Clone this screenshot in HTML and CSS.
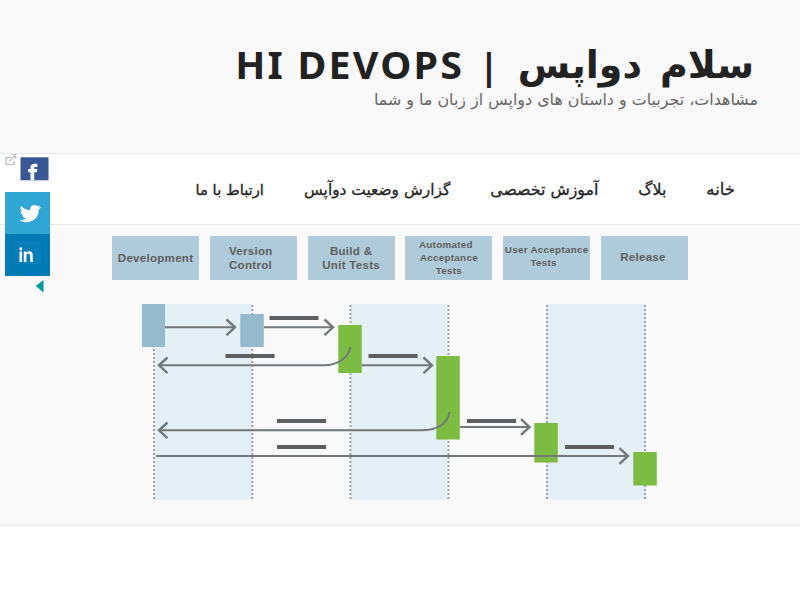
FILE: index.html
```html
<!DOCTYPE html>
<html lang="fa" dir="rtl">
<head>
<meta charset="utf-8">
<title>سلام دواپس | HI DEVOPS</title>
<link rel="stylesheet" href="styles.css">
</head>
<body>
<header class="masthead">
  <h1 class="title"><span class="title-fa">سلام</span> <span class="title-fa title-name">دواپس</span> <span class="title-bar">|</span> <span class="title-en" dir="ltr">HI DEVOPS</span></h1>
  <p class="tagline"><span>مشاهدات، تجربیات و داستان های دواپس از زبان ما و شما</span></p>
</header>
<nav class="nav">
  <a class="n1">خانه</a><a class="n2">بلاگ</a><a class="n3">آموزش تخصصی</a><a class="n4">گزارش وضعیت دوآپس</a><a class="n5">ارتباط با ما</a>
</nav>
<main class="hero" dir="ltr">
  <div class="stages">
    <div class="stage">Development</div>
    <div class="stage"><span class="left">Version<br>Control</span></div>
    <div class="stage build">Build &amp;<br>Unit Tests</div>
    <div class="stage small auto"><span>Automated &nbsp;<br>Acceptance<br>Tests</span></div>
    <div class="stage small upper">User Acceptance<br>Tests &nbsp;</div>
    <div class="stage release">Release</div>
  </div>
  <svg class="flow" width="576" height="200" viewBox="112 302 576 200">
    <g fill="#e4eff6"><path d="M154 304h98.500v196H154zM350.500 304h98v196h-98zM547 304h98v196h-98z"/></g>
    <path d="M154 305v194M252.300 305v194M350.500 305v194M448.500 305v194M547 305v194M645 305v194" stroke="#9da1a3" stroke-width="2" stroke-dasharray="2 2"/>
    <path fill="#96bacd" d="M142 304h23v43h-23zM240.300 314h23.500v33h-23.500z"/>
    <path fill="#7dbc43" d="M338.300 325h23.500v48h-23.500zM436.300 356h23.500v83.500h-23.500zM534.300 423h23.500v39.500h-23.500zM633.300 452h23.500v33.500h-23.500z"/>
    <path fill="#5d5e60" d="M269.500 316h49v4h-49zM225.500 354h49v4h-49zM368.500 354h49v4h-49zM277 419h49v4h-49zM277 445h49v4h-49zM467 419h49v4h-49zM565 445h49v4h-49z"/>
    <g fill="none" stroke="#727779" stroke-width="2">
      <path d="M165 327.300h70M264 327.300h69M159 365.300h165c14 0 25-8 26.500-18.500M362 365.300h70M159 430.300h263c15 0 26-7 27.500-18.500M460 427h70M156 456h472"/>
      <path stroke-width="2.400" d="M226.500 319.500l8.500 7.800-8.500 7.800M324.500 319.500l8.500 7.800-8.500 7.800M167.500 357.500l-8.500 7.800 8.500 7.800M423.500 357.500l8.500 7.800-8.500 7.800M167.500 422.500l-8.500 7.800 8.500 7.800M521 419.200l8.500 7.800-8.500 7.800M619.500 448.200l8.500 7.800-8.500 7.800"/>
    </g>
  </svg>
</main>
<aside class="share" dir="ltr">
  <div class="share-top">
    <svg width="15" height="24" viewBox="0 0 15 24" fill="none" stroke="#c3c6c9" stroke-width="1.600"><path d="M6 4.500H1v7h8V8M4.500 8.500L10 2.500M6.500 1.500h4v4.500"/></svg>
    <svg width="29" height="24" viewBox="0 0 29 24"><path fill="#3a5795" d="M.5.300h28v23H.500z"/><path fill="#fff" d="M10.500 23.300v-8H8.200v-3.200h2.300v-1.300c0-2.800 1.400-4 3.900-4h3v3.200h-2c-1 0-1.200.4-1.200 1.300v.8h3.100l-.4 3.200h-2.700v8z"/></svg>
  </div>
  <svg class="tw" width="45" height="42" viewBox="0 0 45 42"><path fill="#2fa6d3" d="M0 0h45v42H0z"/><path fill="#fff" transform="translate(14.500 11) scale(.88)" d="M24.500 4.500c-.9.400-1.800.6-2.800.8 1-.7 1.800-1.600 2.100-2.700-.9.600-2 1-3.100 1.200C17.600.6 12 2.200 12 7v1.100C8 8 4.200 6 1.900 3 .6 5.300 1.200 8.100 3.400 9.600c-.8 0-1.500-.2-2.200-.6 0 2.400 1.600 4.400 3.900 4.900-.7.200-1.500.2-2.200.1.600 2 2.400 3.300 4.600 3.400-2 1.700-4.700 2.400-7.300 2.100 9.900 6.300 21.800-.1 21.800-12 1-.8 1.900-1.800 2.500-3z"/></svg>
  <svg class="li" width="45" height="42" viewBox="0 0 45 42"><path fill="#007bb6" d="M0 0h45v42H0z"/><path fill="#087db7" d="M8 7h28v23H8z"/><path fill="#fff" d="M14.500 17.500h2.600V28h-2.600zM14.500 13.600h2.600v2.600h-2.600zM18.800 17.500h2.500v1.300c1.800-2.500 6.500-2 6.500 2V28h-2.600v-6.300c0-3-3.800-2.800-3.800 0V28h-2.600z"/></svg>
  <svg class="tri" width="45" height="20" viewBox="0 0 45 20"><path fill="#009a9a" d="M38.500 4v12.500L30.700 10z"/></svg>
</aside>
</body>
</html>
```
FILE: styles.css
```css
* { box-sizing: border-box; }
body { margin: 0; height: 600px; background: #fff; overflow: hidden; font-family: "DejaVu Sans", sans-serif; }
.masthead { height: 153px; background: #f9f9f9; padding: 43px 42px 0; }
.title { display: flex; align-items: center; height: 46px; margin: 0; padding-right: 4px; font-size: 36px; line-height: 46px; color: #222; white-space: nowrap; }
.title-fa { font-size: 38px; transform: translateY(-1px); }
.title-name { margin-right: 18px; }
.title-bar { margin-right: 19px; font-family: "Noto Sans", sans-serif; }
.title-en { margin-right: 15px; font-family: "Noto Sans", sans-serif; letter-spacing: 2px; transform: scale(1.095, 1.03); transform-origin: right; }
.tagline { margin: 0; height: 24px; line-height: 22px; font-size: 15.900px; color: #666; white-space: nowrap; }
.nav { display: flex; gap: 40px; height: 72px; padding: 1px 65px 0; background: #fff; border-top: 1px solid #e9e9e9; border-bottom: 1px solid #e9e9e9; line-height: 70px; font-size: 15.800px; color: #222; -webkit-text-stroke: .3px #222; white-space: nowrap; }
.n1 { font-size: 16.500px; }
.n4 { font-size: 15.400px; }
.n5 { font-size: 14.800px; }
.hero { height: 301px; background: #f9f9f9; border-bottom: 1px solid #e9e9e9; padding: 11px 112px 0; }
.stages { display: grid; grid-template-columns: repeat(6, 1fr); gap: 10.700px; height: 44px; margin-bottom: 22px; }
.stage { display: flex; align-items: center; justify-content: center; text-align: center; background: #afcbd9; color: #5d5e60; font: bold 11.500px/14px "Liberation Sans", Arial, sans-serif; letter-spacing: .3px; white-space: nowrap; }
.left { text-align: left; padding-right: 5px; }
.release { padding: 0 3px 2px 0; }
.stage.small { font-size: 9.800px; line-height: 13px; }
.auto { padding-bottom: 2px; }
.upper { padding-bottom: 4px; }
.flow { display: block; }
.share { position: absolute; left: 5px; top: 153px; width: 45px; }
.share svg { display: block; }
.share-top { display: flex; height: 39px; padding-top: 4px; }
.share-top svg:first-child { margin-top: -4px; }
```
